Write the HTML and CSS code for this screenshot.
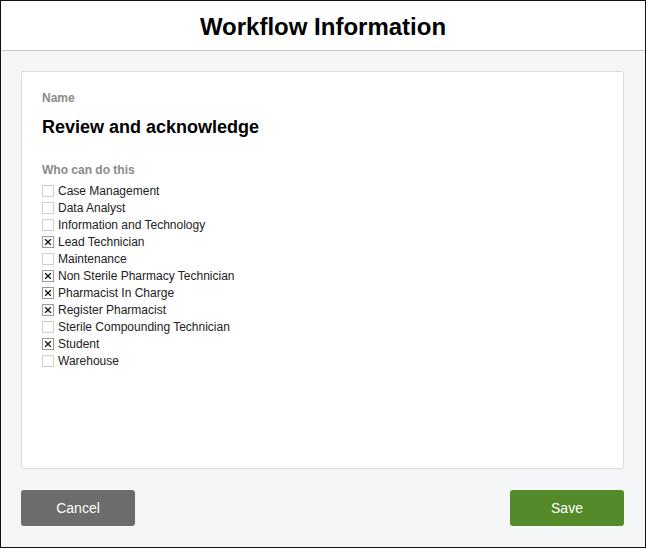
FILE: index.html
```html
<!DOCTYPE html>
<html lang="en">
<head>
    <meta charset="UTF-8">
    <meta name="viewport" content="width=device-width, initial-scale=1.0">
    <title>Workflow Information</title>
    <link rel="stylesheet" href="styles.css">
</head>
<body>
    <div class="window">
        <div class="header">
            <h1>Workflow Information</h1>
        </div>
        <div class="content">
            <div class="card">
                <div class="field-label">Name</div>
                <div class="field-value">Review and acknowledge</div>

                <div class="field-label roles-label">Who can do this</div>
                <ul class="roles">
                    <li><span class="box"></span>Case Management</li>
                    <li><span class="box"></span>Data Analyst</li>
                    <li><span class="box"></span>Information and Technology</li>
                    <li><span class="box checked"><svg viewBox="0 0 10 10"><path d="M2.2 2.2 L7.8 7.8 M7.8 2.2 L2.2 7.8"/></svg></span>Lead Technician</li>
                    <li><span class="box"></span>Maintenance</li>
                    <li><span class="box checked"><svg viewBox="0 0 10 10"><path d="M2.2 2.2 L7.8 7.8 M7.8 2.2 L2.2 7.8"/></svg></span>Non Sterile Pharmacy Technician</li>
                    <li><span class="box checked"><svg viewBox="0 0 10 10"><path d="M2.2 2.2 L7.8 7.8 M7.8 2.2 L2.2 7.8"/></svg></span>Pharmacist In Charge</li>
                    <li><span class="box checked"><svg viewBox="0 0 10 10"><path d="M2.2 2.2 L7.8 7.8 M7.8 2.2 L2.2 7.8"/></svg></span>Register Pharmacist</li>
                    <li><span class="box"></span>Sterile Compounding Technician</li>
                    <li><span class="box checked"><svg viewBox="0 0 10 10"><path d="M2.2 2.2 L7.8 7.8 M7.8 2.2 L2.2 7.8"/></svg></span>Student</li>
                    <li><span class="box"></span>Warehouse</li>
                </ul>
            </div>
            <div class="actions">
                <button class="btn btn-cancel">Cancel</button>
                <button class="btn btn-save">Save</button>
            </div>
        </div>
    </div>
</body>
</html>
```

FILE: styles.css
```css
* {
    margin: 0;
    padding: 0;
    box-sizing: border-box;
    font-family: 'Liberation Sans', Arial, sans-serif;
}

body {
    background: #fff;
}

.window {
    width: 646px;
    height: 548px;
    border: 1px solid #111;
    display: flex;
    flex-direction: column;
    background: #f5f6f8;
}

.header {
    height: 50px;
    background: white;
    border-bottom: 1px solid #c8c8c8;
    display: flex;
    align-items: center;
    justify-content: center;
}

.header h1 {
    font-size: 24px;
    font-weight: bold;
    color: #000;
    margin-top: 2px;
}

.content {
    flex: 1;
    display: flex;
    flex-direction: column;
    padding: 20px 21px 21px 20px;
}

.card {
    flex: 1;
    background: white;
    border: 1px solid #dcdcdc;
    border-radius: 3px;
    padding: 19px 20px;
}

.field-label {
    font-size: 12px;
    line-height: 14px;
    font-weight: bold;
    color: #8a8a8a;
}

.field-value {
    margin-top: 11px;
    font-size: 18px;
    line-height: 22px;
    font-weight: bold;
    color: #000;
}

.roles-label {
    margin-top: 25px;
}

.roles {
    list-style: none;
    margin-top: 5px;
}

.roles li {
    display: flex;
    align-items: center;
    height: 17px;
    font-size: 12px;
    color: #222;
}

.box {
    width: 12px;
    height: 12px;
    border: 1px solid #cfcfcf;
    margin-right: 4px;
    display: flex;
    align-items: center;
    justify-content: center;
}

.box.checked {
    border-color: #9a9a9a;
}

.box svg {
    width: 10px;
    height: 10px;
    stroke: #111;
    stroke-width: 1.3;
    fill: none;
}

.actions {
    display: flex;
    justify-content: space-between;
    margin-top: 21px;
}

.btn {
    width: 114px;
    height: 36px;
    border: none;
    border-radius: 3px;
    color: white;
    font-size: 14px;
    cursor: pointer;
}

.btn-cancel {
    background: #6c6c6c;
}

.btn-save {
    background: #558a2b;
}
```
